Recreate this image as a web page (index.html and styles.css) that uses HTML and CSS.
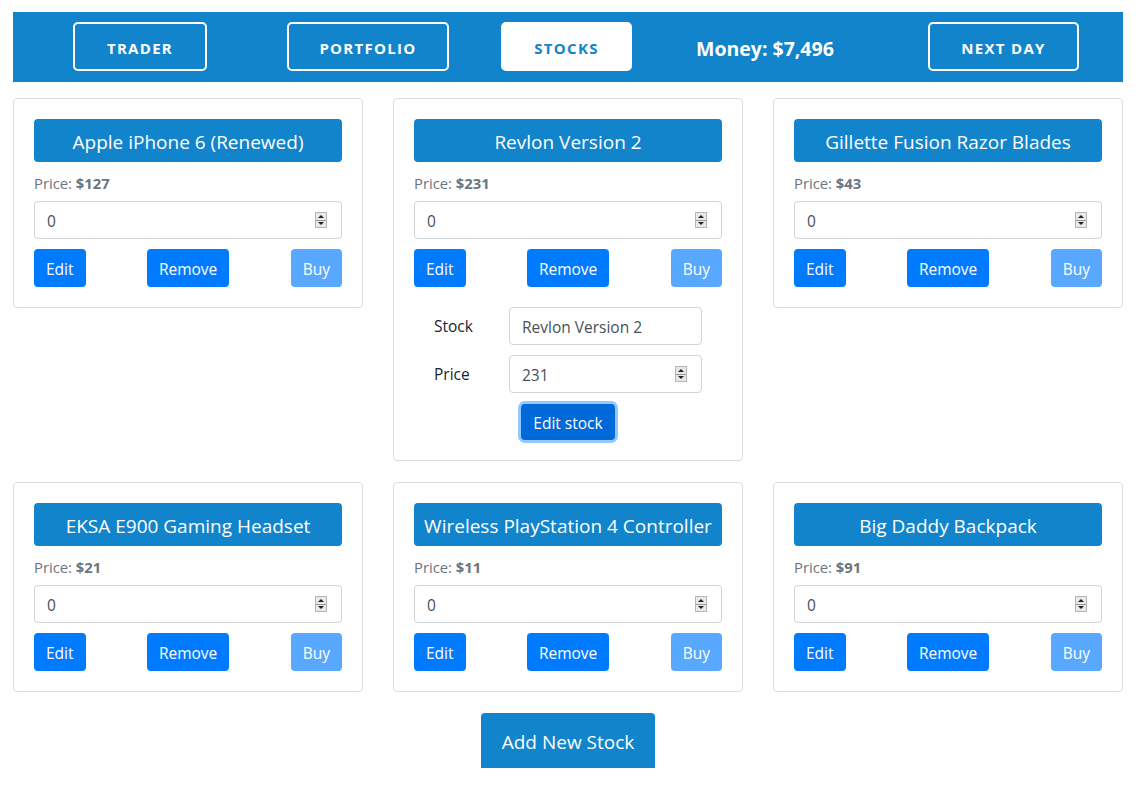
FILE: index.html
```html
<!DOCTYPE html>
<html>
<head>
<meta charset="utf-8">
<link rel="stylesheet" href="styles.css">
</head>
<body>
<div class="page">
  <header class="topbar">
    <button class="nav-btn nav-trader">TRADER</button>
    <button class="nav-btn nav-portfolio">PORTFOLIO</button>
    <button class="nav-btn nav-active nav-stocks">STOCKS</button>
    <span class="money">Money: $7,496</span>
    <button class="nav-btn nav-next">NEXT DAY</button>
  </header>

  <main class="grid">
    <section class="card">
      <div class="card-title">Apple iPhone 6 (Renewed)</div>
      <div class="price">Price: <b>$127</b></div>
      <div class="field"><span class="field-value">0</span><span class="spin"><i class="up"></i><i class="down"></i></span></div>
      <div class="actions"><button class="btn">Edit</button><button class="btn">Remove</button><button class="btn btn-disabled">Buy</button></div>
    </section>

    <section class="card">
      <div class="card-title">Revlon Version 2</div>
      <div class="price">Price: <b>$231</b></div>
      <div class="field"><span class="field-value">0</span><span class="spin"><i class="up"></i><i class="down"></i></span></div>
      <div class="actions"><button class="btn">Edit</button><button class="btn">Remove</button><button class="btn btn-disabled">Buy</button></div>
      <form class="edit-form">
        <div class="form-row"><label class="form-label">Stock</label><div class="field field-small"><span class="field-value">Revlon Version 2</span></div></div>
        <div class="form-row"><label class="form-label">Price</label><div class="field field-small"><span class="field-value">231</span><span class="spin"><i class="up"></i><i class="down"></i></span></div></div>
        <div class="form-submit"><button type="button" class="btn btn-focus">Edit stock</button></div>
      </form>
    </section>

    <section class="card">
      <div class="card-title">Gillette Fusion Razor Blades</div>
      <div class="price">Price: <b>$43</b></div>
      <div class="field"><span class="field-value">0</span><span class="spin"><i class="up"></i><i class="down"></i></span></div>
      <div class="actions"><button class="btn">Edit</button><button class="btn">Remove</button><button class="btn btn-disabled">Buy</button></div>
    </section>

    <section class="card">
      <div class="card-title">EKSA E900 Gaming Headset</div>
      <div class="price">Price: <b>$21</b></div>
      <div class="field"><span class="field-value">0</span><span class="spin"><i class="up"></i><i class="down"></i></span></div>
      <div class="actions"><button class="btn">Edit</button><button class="btn">Remove</button><button class="btn btn-disabled">Buy</button></div>
    </section>

    <section class="card">
      <div class="card-title">Wireless PlayStation 4 Controller</div>
      <div class="price">Price: <b>$11</b></div>
      <div class="field"><span class="field-value">0</span><span class="spin"><i class="up"></i><i class="down"></i></span></div>
      <div class="actions"><button class="btn">Edit</button><button class="btn">Remove</button><button class="btn btn-disabled">Buy</button></div>
    </section>

    <section class="card">
      <div class="card-title">Big Daddy Backpack</div>
      <div class="price">Price: <b>$91</b></div>
      <div class="field"><span class="field-value">0</span><span class="spin"><i class="up"></i><i class="down"></i></span></div>
      <div class="actions"><button class="btn">Edit</button><button class="btn">Remove</button><button class="btn btn-disabled">Buy</button></div>
    </section>
  </main>

  <div class="add-wrap"><button class="add-btn">Add New Stock</button></div>
</div>
</body>
</html>
```

FILE: styles.css
```css
* { box-sizing: border-box; }
html, body { margin: 0; padding: 0; background: #fff; }
body {
  font-family: "Open Sans", "Noto Sans", "Liberation Sans", sans-serif;
  color: #212529;
}
.page {
  width: 1110px;
  margin: 0 0 0 13px;
  padding-top: 12px;
}
.topbar {
  height: 70px;
  background: #1184cc;
  display: flex;
  align-items: center;
}
.nav-btn {
  height: 49px;
  margin-top: -1px;
  border: 2px solid #fff;
  border-radius: 5px;
  background: transparent;
  color: #fff;
  font-family: inherit;
  font-weight: 700;
  font-size: 15px;
  letter-spacing: 1.3px;
  padding: 2px 0 0;
}
.nav-trader { width: 134px; margin-left: 60px; }
.nav-portfolio { width: 162px; margin-left: 80px; }
.nav-stocks { width: 131px; margin-left: 52px; }
.nav-active { background: #fff; color: #1184cc; }
.money {
  margin-left: 64px;
  margin-top: 2px;
  color: #fff;
  font-weight: 700;
  font-size: 19.5px;
  width: 169px;
}
.nav-next { width: 151px; margin-left: 63px; }

.grid {
  margin-top: 16px;
  display: grid;
  grid-template-columns: repeat(3, 350px);
  column-gap: 30px;
  row-gap: 21px;
  align-items: start;
}
.card {
  border: 1px solid #dcdcdc;
  border-radius: 4px;
  padding: 20px;
}
.card-title {
  height: 43px;
  padding-top: 2px;
  background: #1184cc;
  color: #fff;
  border-radius: 4px;
  font-size: 19px;
  display: flex;
  align-items: center;
  justify-content: center;
  white-space: nowrap;
}
.price {
  margin-top: 8px;
  line-height: 24px;
  padding-top: 1px;
  font-size: 14.8px;
  color: #6c757d;
}
.price b { font-weight: 700; }
.field {
  position: relative;
  margin-top: 6px;
  height: 38px;
  border: 1px solid #ced4da;
  border-radius: 4px;
  display: flex;
  align-items: center;
  padding: 2px 12px 0;
  font-size: 15.5px;
  color: #495057;
}
.spin {
  position: absolute;
  right: 14px;
  top: 10px;
  width: 12px;
  height: 16px;
  background: #e8e8e8;
  border: 1px solid #b5b5b5;
  display: flex;
  flex-direction: column;
}
.spin i {
  flex: 1;
  display: flex;
  align-items: center;
  justify-content: center;
}
.spin .up { border-bottom: 1px solid #9a9a9a; }
.spin .up::before {
  content: "";
  border-left: 3px solid transparent;
  border-right: 3px solid transparent;
  border-bottom: 3px solid #222;
}
.spin .down::before {
  content: "";
  border-left: 3px solid transparent;
  border-right: 3px solid transparent;
  border-top: 3px solid #222;
}
.actions {
  margin-top: 10px;
  display: flex;
  justify-content: space-between;
}
.btn {
  height: 38px;
  padding: 2px 12px 0;
  border: none;
  border-radius: 4px;
  background: #007bff;
  color: #fff;
  font-family: inherit;
  font-size: 15.5px;
}
.btn-disabled { background: #58a8ff; }

.edit-form {
  margin: 20px auto 0;
  width: 268px;
}
.form-row {
  display: flex;
  align-items: center;
  margin-bottom: 10px;
}
.form-label {
  width: 75px;
  font-size: 15.5px;
  color: #212529;
}
.field-small {
  margin-top: 0;
  width: 193px;
}
.form-submit {
  display: flex;
  justify-content: center;
}
.btn-focus {
  height: 36px;
  margin-top: 1px;
  background: #0069d9;
  box-shadow: 0 0 0 3px rgba(38, 143, 255, 0.5);
}

.add-wrap {
  display: flex;
  justify-content: center;
  margin-top: 21px;
}
.add-btn {
  width: 174px;
  height: 55px;
  border: none;
  border-radius: 4px 4px 0 0;
  background: #1184cc;
  color: #fff;
  font-family: inherit;
  font-size: 19px;
  padding: 2px 0 0;
}
```
